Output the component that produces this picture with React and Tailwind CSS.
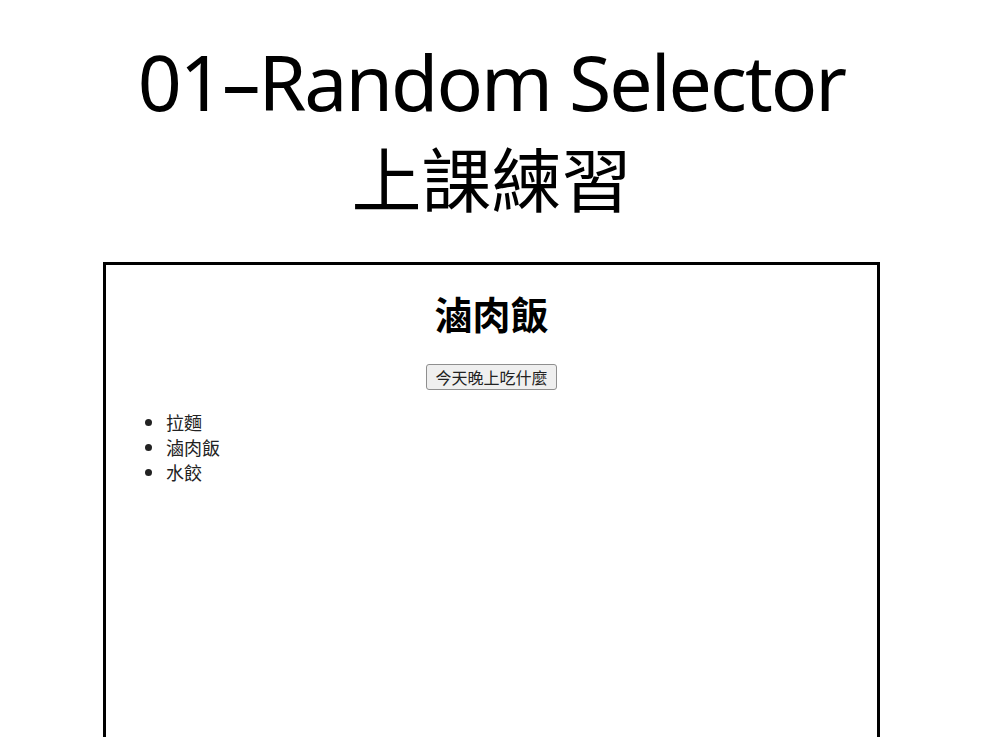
export default function App() {
  const foods = ['拉麵', '滷肉飯', '水餃']
  return (
    <div className="h-[737px] w-[983px] overflow-hidden bg-white text-black [font-family:'Noto_Sans','Noto_Sans_CJK_TC',sans-serif]">
      <div className="flex flex-col items-center pt-[36px]">
        <h1 className="text-[77px] leading-[92px] tracking-[-2px]">01–Random Selector</h1>
        <h2 className="mt-[9px] text-[70px] leading-[80px] [font-family:'Noto_Sans_CJK_TC',sans-serif]">上課練習</h2>
      </div>

      <div className="ml-[103px] mt-[45px] h-[600px] w-[777px] border-x-[3px] border-t-[3px] border-black">
        <div className="flex flex-col items-center pt-[24px] [font-family:'Noto_Sans_CJK_TC',sans-serif]">
          <h3 className="text-[38px] font-bold leading-[48px]">滷肉飯</h3>
          <button
            type="button"
            className="mt-[27px] box-border h-[26px] rounded-[3px] border border-[#8f8f8f] bg-[#efefef] px-[8px] text-[16px] leading-[24px] text-[#222]"
          >
            今天晚上吃什麼
          </button>
        </div>
        <ul className="ml-[43px] mt-[20px] list-disc pl-[17px] text-[18px] leading-[25px] text-[#222] [font-family:'Noto_Sans_CJK_TC',sans-serif]">
          {foods.map((food) => (
            <li key={food}>{food}</li>
          ))}
        </ul>
      </div>
    </div>
  )
}
